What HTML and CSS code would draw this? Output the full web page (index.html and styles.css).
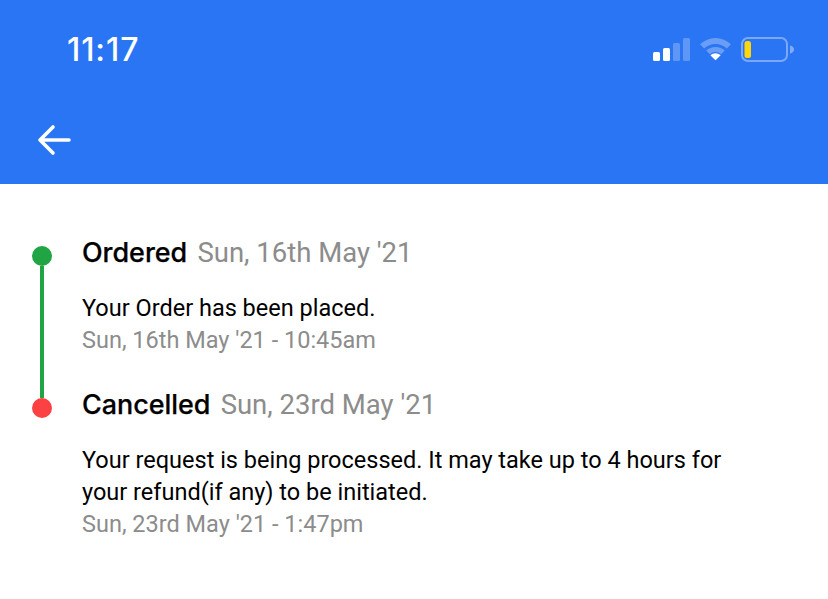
FILE: index.html
```html
<!DOCTYPE html>
<html lang="en">
<head>
<meta charset="utf-8">
<title>Order status</title>
<link rel="stylesheet" href="styles.css">
</head>
<body>
<header class="header">
  <div class="status-bar">
    <span class="clock">11:17</span>
    <div class="status-icons">
      <svg class="signal" width="37" height="25" viewBox="0 0 37 25">
        <rect x="0" y="15" width="7" height="9" rx="1.5" fill="#fff"/>
        <rect x="10" y="11" width="7" height="13" rx="1.5" fill="#fff"/>
        <rect x="20" y="6" width="7" height="18" rx="1.5" fill="#fff" fill-opacity=".25"/>
        <rect x="30" y="1" width="7" height="23" rx="1.5" fill="#fff" fill-opacity=".25"/>
      </svg>
      <svg class="wifi" width="33" height="25" viewBox="0 1 32 24">
        <path d="M1 8A21.500 21.500 0 0 1 31 8L27 12A16 16 0 0 0 5 12Z" fill="#fff" fill-opacity=".3"/>
        <path d="M7 14A13.500 13.500 0 0 1 25 14L21.500 17.500A8.500 8.500 0 0 0 10.500 17.500Z" fill="#fff" fill-opacity=".3"/>
        <path d="M16 23.500 11 18.500A7.500 7.500 0 0 1 21 18.500Z" fill="#fff"/>
      </svg>
      <svg class="battery" width="53" height="25" viewBox="0 0 53 25">
        <rect x="1" y="1" width="45" height="23" rx="6" fill="none" stroke="#fff" stroke-opacity=".38" stroke-width="2"/>
        <rect x="3.500" y="4" width="6.500" height="17" rx="2.500" fill="#ffd60a"/>
        <path d="M49 8.500c2.500.6 4 2 4 4s-1.500 3.400-4 4z" fill="#fff" fill-opacity=".4"/>
      </svg>
    </div>
  </div>
  <div class="nav-bar">
    <svg class="back" width="34" height="32" viewBox="0 0 34 32">
      <path d="M32 16H3M16 3 3 16l13 13" fill="none" stroke="#fff" stroke-width="3.600" stroke-linecap="round" stroke-linejoin="round"/>
    </svg>
  </div>
</header>
<main class="timeline">
  <section class="step step-done">
    <div class="marker"><span class="dot dot-green"></span><span class="line"></span></div>
    <div class="step-body">
      <h2 class="step-title">Ordered <span class="step-date">Sun, 16th May '21</span></h2>
      <p class="step-text">Your Order has been placed.</p>
      <p class="step-time">Sun, 16th May '21 - 10:45am</p>
    </div>
  </section>
  <section class="step">
    <div class="marker"><span class="dot dot-red"></span></div>
    <div class="step-body">
      <h2 class="step-title">Cancelled <span class="step-date">Sun, 23rd May '21</span></h2>
      <p class="step-text">Your request is being processed. It may take up to 4 hours for your refund(if any) to be initiated.</p>
      <p class="step-time">Sun, 23rd May '21 - 1:47pm</p>
    </div>
  </section>
</main>
</body>
</html>
```
FILE: styles.css
```css
* { box-sizing: border-box; }
html, body { margin: 0; height: 100%; background: #fff; overflow: hidden; }
body { font-family: Roboto, "Liberation Sans", sans-serif; color: #000; }
.header { height: 184px; background: #2a75f3; color: #fff; display: flex; flex-direction: column; }
.status-bar { height: 100px; display: flex; align-items: flex-start; justify-content: space-between; padding: 30px 34px 0 67px; }
.clock { font-family: Inter, Roboto, sans-serif; font-size: 32px; line-height: 40px; font-weight: 500; letter-spacing: .9px; }
.status-icons { display: flex; align-items: flex-start; gap: 9px; padding-top: 7px; }
.nav-bar { padding: 24px 0 0 37px; }
.back { display: block; }
.timeline { padding-top: 53px; padding-left: 32px; }
.step { display: flex; height: 152px; }
.marker { width: 20px; margin-right: 30px; display: flex; flex-direction: column; align-items: center; padding-top: 9px; }
.dot { width: 20px; height: 20px; border-radius: 50%; flex: none; }
.dot-green { background: #21a544; }
.dot-red { background: #fb4141; }
.line { width: 4px; flex: 1; background: #21a544; }
.step-done .marker { margin-bottom: -9px; }
.step-body { width: 650px; }
.step-title { margin: 0; font-family: Inter, Roboto, sans-serif; font-size: 26.900px; line-height: 30px; font-weight: 500; -webkit-text-stroke: .25px #000; }
.step-date { margin-left: 3px; font-family: Roboto, sans-serif; font-size: 27.500px; font-weight: 400; color: #8c8c8c; -webkit-text-stroke: 0; }
.step-text { margin: 24px 0 0; font-size: 23.500px; line-height: 32px; }
.step-time { margin: 0; font-size: 23.500px; line-height: 32px; color: #8c8c8c; }
```
